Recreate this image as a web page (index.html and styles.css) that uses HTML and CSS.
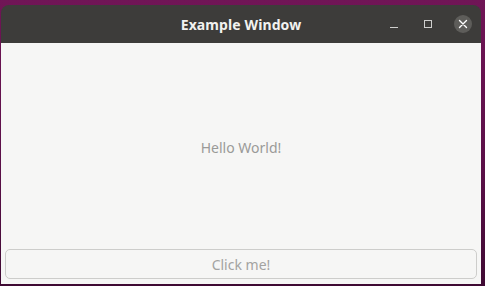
FILE: index.html
```html
<!DOCTYPE html>
<html>
<head>
<meta charset="utf-8">
<link rel="stylesheet" href="styles.css">
</head>
<body>
<div class="window">
  <header class="titlebar">
    <span class="title">Example Window</span>
    <div class="controls">
      <span class="ctl minimize"><svg width="10" height="10" viewBox="0 0 10 10"><path d="M1 8.5H9" stroke="#cfcfcd" stroke-width="1"/></svg></span>
      <span class="ctl maximize"><svg width="10" height="10" viewBox="0 0 10 10"><rect x="1.5" y="1.5" width="7" height="7" fill="none" stroke="#cfcfcd" stroke-width="1"/></svg></span>
      <span class="ctl close"><svg width="10" height="10" viewBox="0 0 10 10"><path d="M1.5 1.5L8.5 8.5M8.5 1.5L1.5 8.5" stroke="#ffffff" stroke-width="1.4" stroke-linecap="round"/></svg></span>
    </div>
  </header>
  <main class="content">
    <div class="label">Hello World!</div>
    <button class="btn">Click me!</button>
  </main>
</div>
</body>
</html>
```
FILE: styles.css
```css
html, body {
  margin: 0;
  padding: 0;
  height: 100%;
}
body {
  background: linear-gradient(180deg, #701556 0%, #5a0f47 60%, #3f0a33 100%);
  font-family: "Noto Sans", "DejaVu Sans", sans-serif;
  overflow: hidden;
}
.window {
  margin: 5px 4px 0 1px;
  height: 279px;
  display: flex;
  flex-direction: column;
  border-radius: 8px 8px 0 0;
  overflow: hidden;
}
.titlebar {
  height: 38px;
  flex: none;
  background: #3d3c3a;
  display: flex;
  align-items: center;
  justify-content: center;
  position: relative;
}
.title {
  color: #f2f2f0;
  font-weight: bold;
  font-size: 14px;
  letter-spacing: 0.1px;
}
.controls {
  position: absolute;
  right: 9px;
  top: 0;
  height: 38px;
  display: flex;
  align-items: center;
  gap: 14px;
}
.ctl {
  width: 20px;
  height: 20px;
  display: flex;
  align-items: center;
  justify-content: center;
}
.close {
  width: 18px;
  height: 18px;
  border-radius: 50%;
  background: #5e5d5a;
  margin-left: 2px;
}
.content {
  flex: 1;
  background: #f6f6f5;
  display: flex;
  flex-direction: column;
  padding: 0 4px 5px 4px;
}
.label {
  flex: 1;
  display: flex;
  align-items: center;
  justify-content: center;
  color: #9a9a98;
  font-size: 14px;
  padding-top: 3px;
}
.btn {
  height: 30px;
  background: #f6f6f5;
  border: 1px solid #cdcdcb;
  border-radius: 5px;
  color: #a3a3a1;
  font-family: "Noto Sans", "DejaVu Sans", sans-serif;
  font-size: 14px;
  padding: 0;
}
```
